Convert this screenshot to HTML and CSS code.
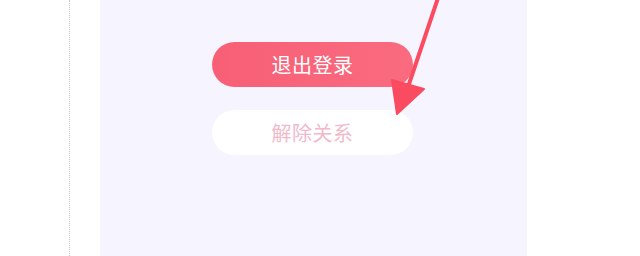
FILE: index.html
```html
<!DOCTYPE html>
<html lang="zh">
<head>
<meta charset="utf-8">
<link rel="stylesheet" href="styles.css">
</head>
<body>
<div class="page">
  <div class="guide"></div>
  <div class="panel">
    <div class="btn btn-primary">退出登录</div>
    <div class="btn btn-light">解除关系</div>
  </div>
</div>
<svg class="arrow" width="640" height="256" viewBox="0 0 640 256">
  <line x1="438" y1="-2" x2="407" y2="90" stroke="#fb4b60" stroke-width="4" stroke-linecap="round"/>
  <polygon points="392,80 424,89 397,114" fill="#fb4b60" stroke="#fb4b60" stroke-width="2" stroke-linejoin="round"/>
</svg>
</body>
</html>
```
FILE: styles.css
```css
html, body {
  margin: 0;
  padding: 0;
  background: #ffffff;
  width: 640px;
  height: 256px;
  overflow: hidden;
}
.page {
  display: flex;
  height: 256px;
  font-family: "Noto Sans CJK SC", "Noto Sans", sans-serif;
}
.guide {
  margin-left: 69px;
  width: 0;
  border-left: 1px dotted #c8c8c8;
  height: 256px;
}
.panel {
  margin-left: 30px;
  width: 427px;
  background: #f6f5ff;
  display: flex;
  flex-direction: column;
  padding-top: 42px;
  padding-left: 112px;
  box-sizing: border-box;
  gap: 23px;
}
.btn {
  width: 201px;
  height: 45px;
  border-radius: 23px;
  display: flex;
  align-items: center;
  justify-content: center;
  font-size: 20px;
  font-weight: 400;
  letter-spacing: 0.5px;
}
.btn-primary {
  background: linear-gradient(90deg, #f75f76, #fa6b80);
  color: #ffffff;
}
.btn-light {
  background: #ffffff;
  color: #f1b9c9;
}
.arrow {
  position: absolute;
  left: 0;
  top: 0;
}
```
